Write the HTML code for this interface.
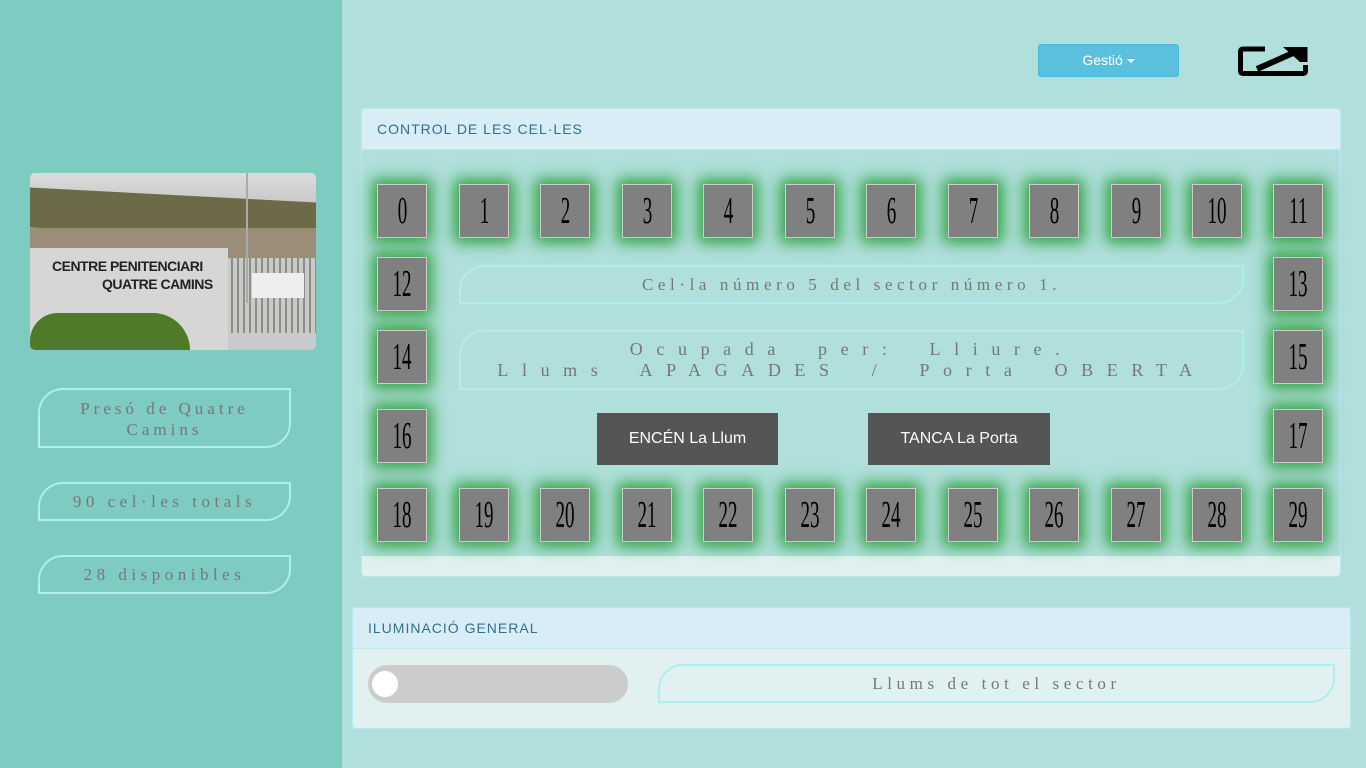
<!DOCTYPE html>
<html><head><meta charset="utf-8"><style>
*{box-sizing:border-box;margin:0;padding:0}
body{width:1366px;height:768px;background:#b0dfdc;position:relative;overflow:hidden;font-family:"Liberation Sans",sans-serif}
.side{position:absolute;left:0;top:0;width:342px;height:768px;background:#7ecbc2}
.photo{position:absolute;left:30px;top:173px;width:286px;height:177px;border-radius:5px;overflow:hidden;background:#c9cacb}
.tag{position:absolute;border:2px solid #aeeeee;border-radius:25px 0 25px 0;color:#777;font-family:"Liberation Serif",serif;text-align:center;letter-spacing:4px}
.cell{position:absolute;width:50px;height:54px;background:#808080;border:1px solid #ccc;box-shadow:0 0 14px 5px rgba(25,150,35,.85);text-align:center;overflow:hidden}
.cell span{display:inline-block;font-family:"Liberation Serif",serif;font-size:38px;line-height:52px;color:#000;transform:scaleX(.5)}
.panel-h{position:absolute;background:#d9edf7;border:1px solid #bce8f1;color:#31708f;font-size:14px;letter-spacing:1px;padding-left:15px}
.btn{position:absolute;background:#555;color:#fff;font-size:16px;text-align:center;line-height:51px}
</style></head><body>
<div class="side"></div>
<div class="photo">
 <div style="position:absolute;left:0;top:0;width:286px;height:30px;background:linear-gradient(#dcdcdc,#c8c8c8)"></div>
 <div style="position:absolute;left:0;top:22px;width:286px;height:40px;background:#6d6a48;transform:skewY(3deg)"></div>
 <div style="position:absolute;left:0;top:55px;width:286px;height:30px;background:#9b8e78"></div>
 <div style="position:absolute;left:195px;top:85px;width:91px;height:75px;background:repeating-linear-gradient(90deg,#8e8e8e 0 2px,#c8cac4 2px 6px)"></div>
 <div style="position:absolute;left:222px;top:100px;width:52px;height:25px;background:#eee"></div>
 <div style="position:absolute;left:0;top:75px;width:198px;height:102px;background:#d6d6d4"></div>
 <div style="position:absolute;left:22px;top:85px;font-weight:bold;font-size:14px;color:#222;letter-spacing:-.5px">CENTRE PENITENCIARI</div>
 <div style="position:absolute;left:72px;top:103px;font-weight:bold;font-size:14px;color:#222;letter-spacing:-.5px">QUATRE CAMINS</div>
 <div style="position:absolute;left:0;top:140px;width:160px;height:37px;background:#4f7a2a;border-radius:30px 40px 0 0"></div>
 <div style="position:absolute;left:216px;top:0;width:2px;height:130px;background:#aaa"></div>
</div>
<div class="tag" style="left:38px;top:388px;width:253px;height:60px;font-size:17px;line-height:21px;padding-top:8px">Presó de Quatre<br>Camins</div>
<div class="tag" style="left:38px;top:482px;width:253px;height:39px;font-size:17px;line-height:36px;letter-spacing:4.5px">90 cel·les totals</div>
<div class="tag" style="left:38px;top:555px;width:253px;height:39px;font-size:17px;line-height:36px;letter-spacing:4.5px">28 disponibles</div>

<div style="position:absolute;left:1038px;top:44px;width:141px;height:33px;background:#5bc0de;border:1px solid #46b8da;border-radius:3px;color:#fff;font-size:14px;text-align:center;line-height:31px">Gestió <span style="display:inline-block;border-left:4px solid transparent;border-right:4px solid transparent;border-top:4px solid #fff;vertical-align:middle"></span></div>
<svg style="position:absolute;left:1237px;top:45px" width="72" height="32" viewBox="0 0 72 32">
 <path d="M28 4 H6 Q3.5 4 3.5 6.5 V26 Q3.5 28.5 6 28.5 H66 Q68.5 28.5 68.5 26 V20" fill="none" stroke="#000" stroke-width="5"/>
 <path d="M20 24 L56 8" stroke="#000" stroke-width="6"/>
 <path d="M46 2 H70.5 V17 L63 17 Z" fill="#000"/>
</svg>

<div style="position:absolute;left:361px;top:108px;width:980px;height:469px;border:1px solid #bce8f1;border-radius:4px;background:#b0dfdc"></div>
<div style="position:absolute;left:362px;top:556px;width:978px;height:20px;background:#e0f1ef;border-radius:0 0 4px 4px"></div>
<div class="panel-h" style="left:361px;top:108px;width:980px;height:42px;line-height:41px;border-radius:4px 4px 0 0">CONTROL DE LES CEL·LES</div>

<div class="cell" style="left:377px;top:184px"><span>0</span></div>
<div class="cell" style="left:459px;top:184px"><span>1</span></div>
<div class="cell" style="left:540px;top:184px"><span>2</span></div>
<div class="cell" style="left:622px;top:184px"><span>3</span></div>
<div class="cell" style="left:703px;top:184px"><span>4</span></div>
<div class="cell" style="left:785px;top:184px"><span>5</span></div>
<div class="cell" style="left:866px;top:184px"><span>6</span></div>
<div class="cell" style="left:948px;top:184px"><span>7</span></div>
<div class="cell" style="left:1029px;top:184px"><span>8</span></div>
<div class="cell" style="left:1111px;top:184px"><span>9</span></div>
<div class="cell" style="left:1192px;top:184px"><span>10</span></div>
<div class="cell" style="left:1273px;top:184px"><span>11</span></div>
<div class="cell" style="left:377px;top:257px"><span>12</span></div>
<div class="cell" style="left:1273px;top:257px"><span>13</span></div>
<div class="cell" style="left:377px;top:330px"><span>14</span></div>
<div class="cell" style="left:1273px;top:330px"><span>15</span></div>
<div class="cell" style="left:377px;top:409px"><span>16</span></div>
<div class="cell" style="left:1273px;top:409px"><span>17</span></div>
<div class="cell" style="left:377px;top:488px"><span>18</span></div>
<div class="cell" style="left:459px;top:488px"><span>19</span></div>
<div class="cell" style="left:540px;top:488px"><span>20</span></div>
<div class="cell" style="left:622px;top:488px"><span>21</span></div>
<div class="cell" style="left:703px;top:488px"><span>22</span></div>
<div class="cell" style="left:785px;top:488px"><span>23</span></div>
<div class="cell" style="left:866px;top:488px"><span>24</span></div>
<div class="cell" style="left:948px;top:488px"><span>25</span></div>
<div class="cell" style="left:1029px;top:488px"><span>26</span></div>
<div class="cell" style="left:1111px;top:488px"><span>27</span></div>
<div class="cell" style="left:1192px;top:488px"><span>28</span></div>
<div class="cell" style="left:1273px;top:488px"><span>29</span></div>

<div class="tag" style="left:459px;top:265px;width:785px;height:39px;font-size:17px;line-height:36px;letter-spacing:4.6px">Cel·la número 5 del sector número 1.</div>
<div class="tag" style="left:459px;top:330px;width:785px;height:60px;font-size:18px;line-height:21px;padding-top:7px;letter-spacing:13.6px;word-spacing:11px">Ocupada per: Lliure.<br>Llums APAGADES / Porta OBERTA</div>

<div class="btn" style="left:597px;top:413px;width:181px;height:52px">ENCÉN La Llum</div>
<div class="btn" style="left:868px;top:413px;width:182px;height:52px">TANCA La Porta</div>

<div style="position:absolute;left:352px;top:607px;width:999px;height:122px;border:1px solid #bce8f1;border-radius:4px;background:#e0f1ef"></div>
<div class="panel-h" style="left:352px;top:607px;width:999px;height:42px;line-height:41px;border-radius:4px 4px 0 0">ILUMINACIÓ GENERAL</div>
<div style="position:absolute;left:368px;top:665px;width:260px;height:38px;background:#ccc;border-radius:19px"></div>
<div style="position:absolute;left:372px;top:671px;width:26px;height:26px;background:#fff;border-radius:50%"></div>
<div class="tag" style="left:658px;top:664px;width:677px;height:39px;font-size:17px;line-height:36px;letter-spacing:4.6px">Llums de tot el sector</div>
</body></html>
